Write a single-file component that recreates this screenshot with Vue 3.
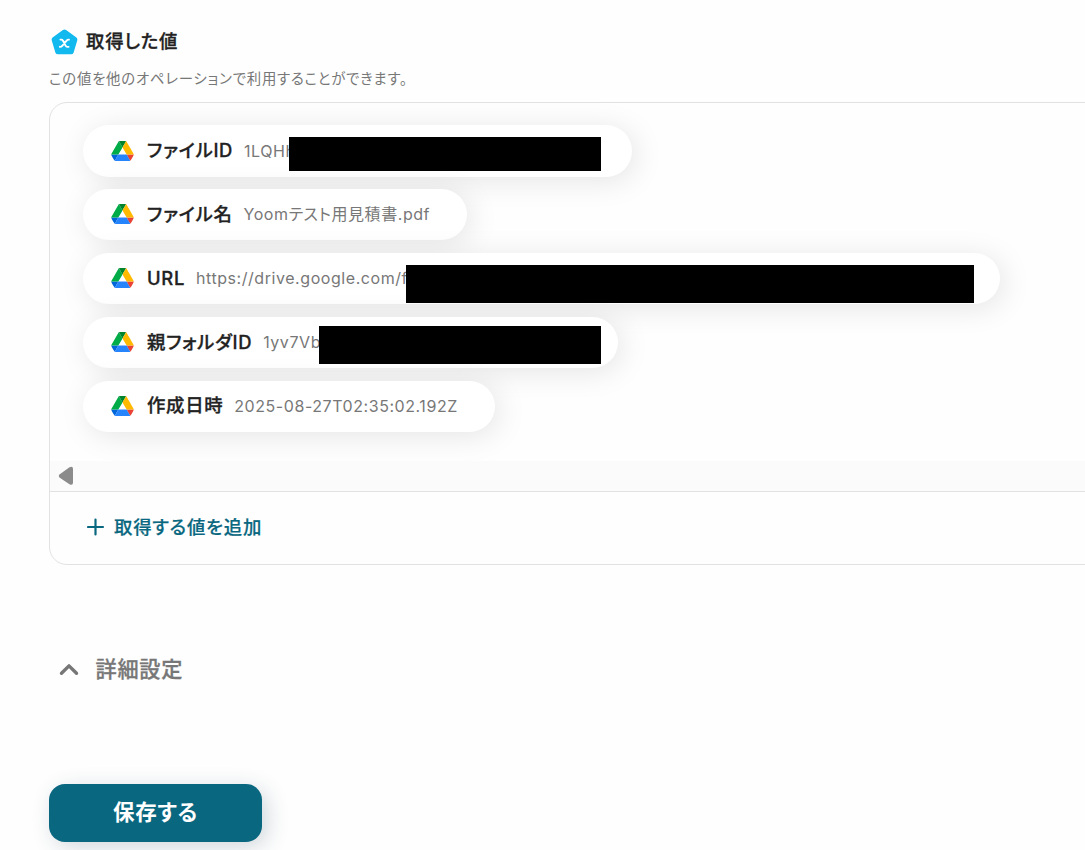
<template>
  <div class="operation-page">
    <div class="section-header">
      <svg class="variable-icon" viewBox="0 0 28 28">
        <path d="M12.3 1Q14 -.1 15.7 1L26 8.5Q27.8 9.9 27.2 11.9L23.4 24.6Q22.7 26.3 20.7 26.3H7.3Q5.3 26.3 4.6 24.6L.8 11.9Q.2 9.9 2 8.5Z" fill="#12b9ee" />
        <path d="M9.8 11H10.8Q11.8 11 12.3 12L15.3 17.5Q15.8 18.5 16.8 18.5H18.2M18.6 11Q17.2 10.9 16.2 12L11.6 17.4Q10.6 18.6 9.2 18.5" fill="none" stroke="#fff" stroke-width="2" stroke-linecap="round" />
      </svg>
      <span class="section-title">取得した値</span>
    </div>
    <p class="section-desc">この値を他のオペレーションで利用することができます。</p>

    <div class="output-panel">
      <!-- 取得した値の一覧 -->
      <div class="output-list">
        <div v-for="item in outputs" :key="item.id" class="output-item" :class="item.id">
          <svg class="drive-icon" viewBox="0 0 87.3 78">
            <path d="m6.6 66.85 3.85 6.65c.8 1.4 1.95 2.5 3.3 3.3l13.75-23.8h-27.5c0 1.55.4 3.1 1.2 4.5z" fill="#0066da" />
            <path d="m43.65 25-13.75-23.8c-1.35.8-2.5 1.9-3.3 3.3l-25.4 44a9.06 9.06 0 0 0 -1.2 4.5h27.5z" fill="#00ac47" />
            <path d="m73.55 76.8c1.35-.8 2.5-1.9 3.3-3.3l1.6-2.75 7.65-13.25c.8-1.4 1.2-2.95 1.2-4.5h-27.5l5.85 11.5z" fill="#ea4335" />
            <path d="m43.65 25 13.75-23.8c-1.35-.8-2.9-1.2-4.5-1.2h-18.5c-1.6 0-3.15.45-4.5 1.2z" fill="#00832d" />
            <path d="m59.8 53h-32.3l-13.75 23.8c1.35.8 2.9 1.2 4.5 1.2h50.8c1.6 0 3.15-.45 4.5-1.2z" fill="#2684fc" />
            <path d="m73.4 26.5-12.7-22c-.8-1.4-1.95-2.5-3.3-3.3l-13.75 23.8 16.15 28h27.45c0-1.55-.4-3.1-1.2-4.5z" fill="#ffba00" />
          </svg>
          <span class="item-label">{{ item.label }}</span>
          <span class="item-value">{{ item.value }}</span>
          <span v-if="item.masked" class="mask"></span>
        </div>
      </div>
      <div class="scrollbar">
        <svg viewBox="0 0 16 20">
          <path d="M1.8 8.2 11.5 1.2Q15 -.5 15 3V16.5Q15 20 11.5 18.3L1.8 11.8Q-.2 10 1.8 8.2Z" fill="#8b8b8b" />
        </svg>
      </div>
      <div class="add-output">
        <svg viewBox="0 0 18 18">
          <path d="M8.5 1.5V16.5M1 9H16" fill="none" stroke="#0a6780" stroke-width="2.2" stroke-linecap="round" />
        </svg>
        <span>取得する値を追加</span>
      </div>
    </div>

    <!-- 詳細設定 -->
    <div class="detail-setting">
      <svg viewBox="0 0 20 14">
        <path d="M2.5 11.2 10 3.9 17.5 11.2" fill="none" stroke="#777" stroke-width="3.4" stroke-linecap="round" stroke-linejoin="round" />
      </svg>
      <span>詳細設定</span>
    </div>

    <button class="save-button">保存する</button>
  </div>
</template>

<script setup>
const outputs = [
  { id: 'file-id', label: 'ファイルID', value: '1LQHh', masked: true },
  { id: 'file-name', label: 'ファイル名', value: 'Yoomテスト用見積書.pdf' },
  { id: 'url', label: 'URL', value: 'https://drive.google.com/f', masked: true },
  { id: 'folder-id', label: '親フォルダID', value: '1yv7Vb', masked: true },
  { id: 'created-at', label: '作成日時', value: '2025-08-27T02:35:02.192Z' }
]
</script>

<style>
body {
  margin: 0;
  background: #fefefe;
  overflow: hidden;
}
</style>

<style scoped>
.operation-page {
  width: 1085px;
  height: 850px;
  box-sizing: border-box;
  padding: 27px 0 0 49px;
  overflow: hidden;
  font-family: Inter, "Noto Sans CJK JP", sans-serif;
  font-feature-settings: "palt";
  color: #222;
}

.section-header {
  display: flex;
  align-items: center;
  height: 30px;
  gap: 8px;
  padding-left: 2px;
}

.variable-icon {
  width: 27px;
  height: 27px;
}

.section-title {
  padding-bottom: 2px;
  font-size: 18.4px;
  font-weight: 500;
  line-height: 28px;
  letter-spacing: 0.8px;
  -webkit-text-stroke: 0.3px currentColor;
}

.section-desc {
  margin: 11px 0 0;
  font-size: 14.4px;
  line-height: 22px;
  letter-spacing: 0.78px;
  color: #777;
}

/* 一覧パネル */
.output-panel {
  width: 1060px;
  height: 463px;
  box-sizing: border-box;
  margin-top: 12px;
  border: 1px solid #e2e2e2;
  border-radius: 18px;
  overflow: hidden;
}

.output-list {
  display: flex;
  flex-direction: column;
  gap: 12.6px;
  height: 358px;
  box-sizing: border-box;
  padding: 22.4px 0 0 33px;
  overflow: hidden;
}

.output-item {
  position: relative;
  display: flex;
  align-items: center;
  flex-shrink: 0;
  height: 51.2px;
  box-sizing: border-box;
  padding: 0 0 0.6px 28px;
  border-radius: 26px;
  background: #fff;
  box-shadow: 4px 4px 30px rgba(0, 0, 0, 0.1);
  white-space: nowrap;
}

.file-id {
  width: 549px;
}

.file-name {
  width: 384px;
}

.url {
  width: 917px;
}

.folder-id {
  width: 535px;
}

.created-at {
  width: 412px;
}

.drive-icon {
  width: 23px;
  height: 20px;
  margin-right: 13px;
}

.item-label {
  padding-bottom: 1px;
  font-size: 18.4px;
  font-weight: 500;
  line-height: 26px;
  letter-spacing: 0.68px;
  -webkit-text-stroke: 0.3px currentColor;
}

.item-value {
  margin-left: 11px;
  font-size: 16px;
  line-height: 24px;
  letter-spacing: 0.56px;
  color: #777;
}

.mask {
  position: absolute;
  background: #000;
}

.file-id .mask {
  left: 206px;
  top: 11.6px;
  width: 312px;
  height: 34px;
}

.url .mask {
  left: 323px;
  top: 12px;
  width: 568px;
  height: 38px;
}

.folder-id .mask {
  left: 236px;
  top: 9.2px;
  width: 282px;
  height: 38px;
}

.scrollbar {
  display: flex;
  align-items: center;
  height: 31px;
  box-sizing: border-box;
  padding-left: 8px;
  background: #fbfbfb;
  border-bottom: 1px solid #e2e2e2;
}

.scrollbar svg {
  width: 16px;
  height: 20px;
}

.add-output {
  display: flex;
  align-items: center;
  height: 70px;
  padding-left: 37px;
  gap: 9px;
  font-size: 18.4px;
  font-weight: 500;
  letter-spacing: 0.75px;
  color: #0a6780;
}

.add-output svg {
  width: 18px;
  height: 18px;
}

.add-output span {
  padding-bottom: 2px;
  -webkit-text-stroke: 0.2px currentColor;
}

/* 詳細設定 */
.detail-setting {
  display: flex;
  align-items: center;
  height: 36px;
  margin-top: 86px;
  padding-left: 10px;
  gap: 16.5px;
  font-size: 21.2px;
  font-weight: 500;
  letter-spacing: 0.7px;
  color: #777;
}

.detail-setting svg {
  width: 20px;
  height: 14px;
}

.detail-setting span {
  padding-bottom: 4px;
  -webkit-text-stroke: 0.3px currentColor;
}

.save-button {
  display: block;
  width: 213px;
  height: 58px;
  margin-top: 97px;
  padding: 0 0 5px;
  border: none;
  border-radius: 16px;
  background: #0a6780;
  box-shadow: 5px 5px 22px rgba(30, 60, 80, 0.2);
  font-family: inherit;
  font-feature-settings: inherit;
  font-size: 21.5px;
  font-weight: 700;
  letter-spacing: 0.7px;
  color: #fff;
}
</style>
